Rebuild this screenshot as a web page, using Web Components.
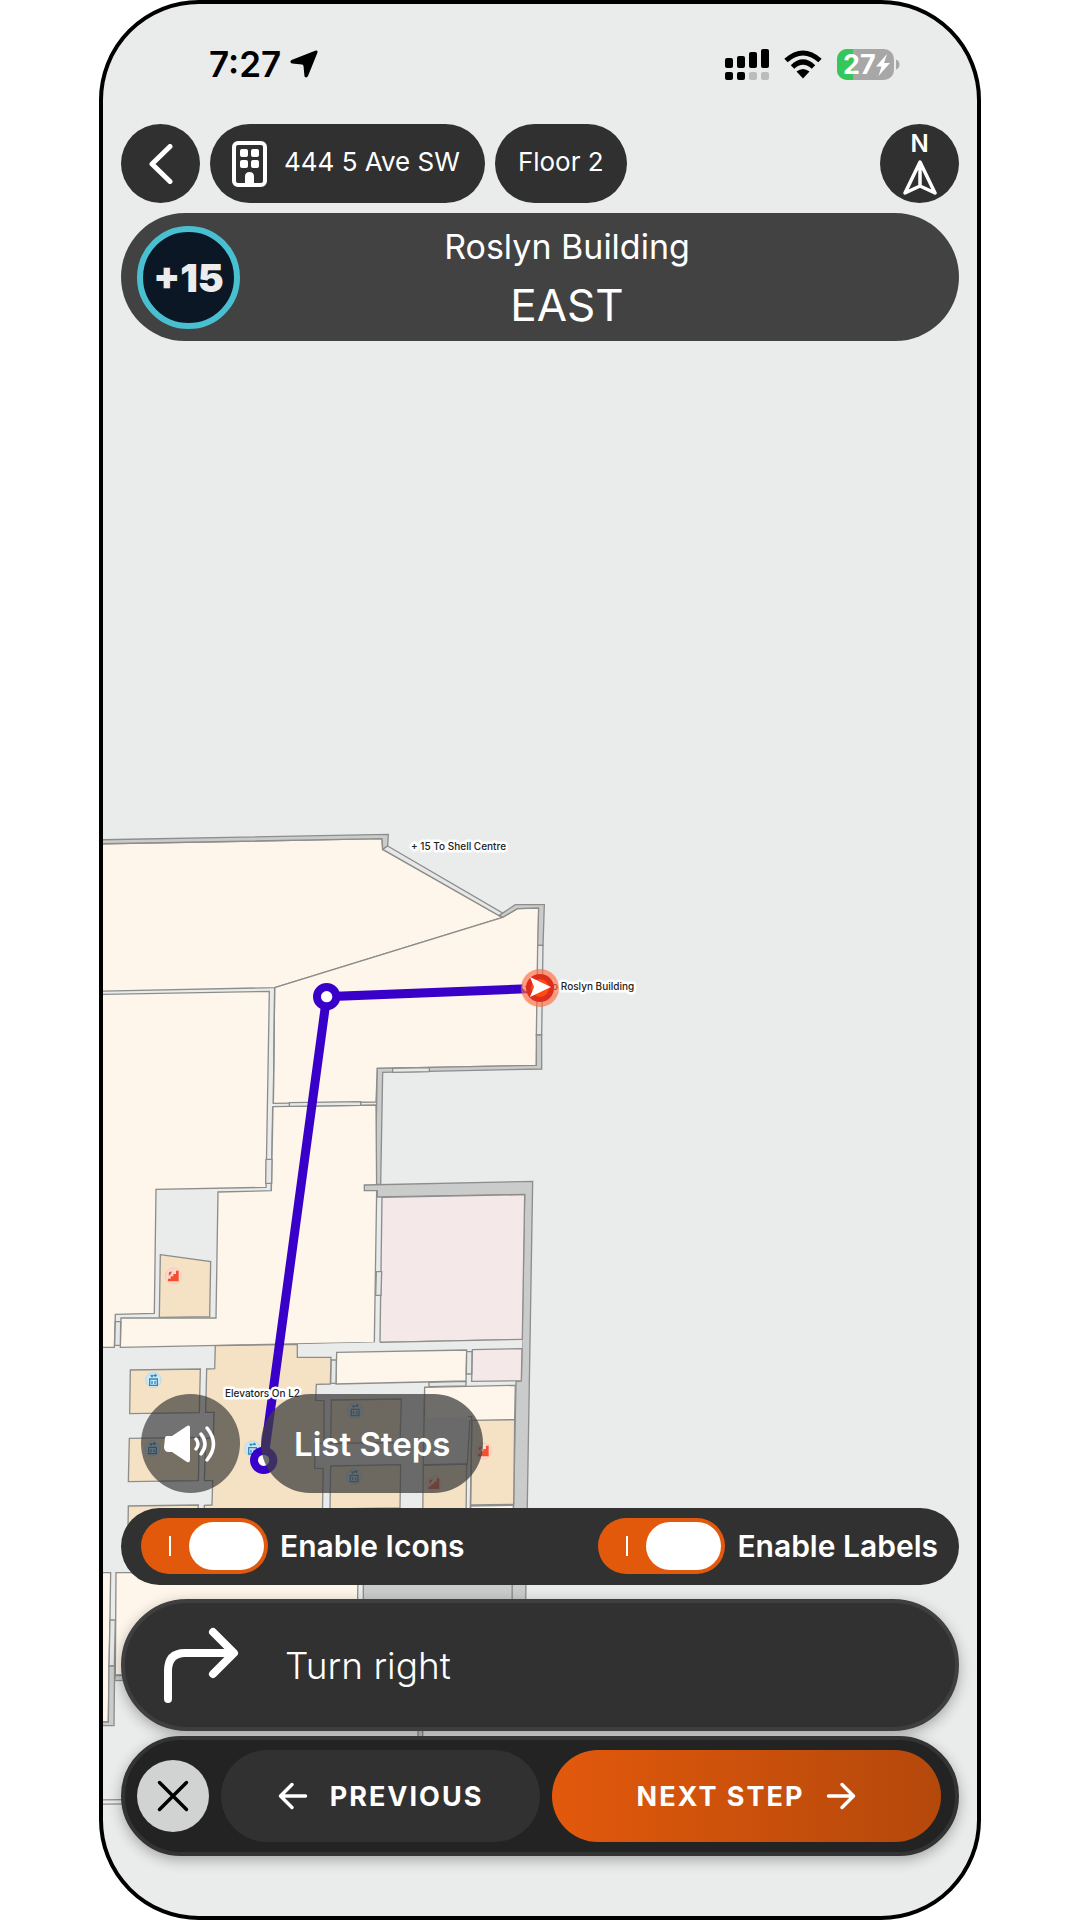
<!DOCTYPE html>
<html lang="en">
<head>
<meta charset="utf-8">
<meta name="viewport" content="width=device-width, initial-scale=1">
<title>Indoor navigation</title>
<style>
  body { margin: 0; background: #fff; font-family: Inter, "Noto Sans", sans-serif; color: #fff; }
</style>
</head>
<body>
<phone-frame>
  <floor-map slot="map"></floor-map>
  <status-bar></status-bar>
  <place-header></place-header>
  <route-banner><span slot="place">Roslyn Building</span><span slot="heading">EAST</span></route-banner>
  <map-actions></map-actions>
  <toggle-bar>
    <toggle-switch>Enable Icons</toggle-switch>
    <toggle-switch>Enable Labels</toggle-switch>
  </toggle-bar>
  <turn-card>Turn right</turn-card>
  <step-nav></step-nav>
</phone-frame>

<script>
const define = (name, html) => {
  const template = document.createElement('template');
  template.innerHTML = `<style>
    *, *::before, *::after { box-sizing: border-box; }
    :host { display: block; box-sizing: border-box; }
    button { border: 0; margin: 0; padding: 0; color: inherit; font: inherit; cursor: pointer;
      display: flex; align-items: center; justify-content: center; }
    svg { display: block; flex: none; }
  </style>` + html;
  customElements.define(name, class extends HTMLElement {
    constructor() {
      super();
      this.attachShadow({ mode: 'open' }).append(template.content.cloneNode(true));
    }
  });
};

define('phone-frame', `
<style>
  :host { position: relative; display: flex; flex-direction: column; max-width: 882px; min-height: 100vh;
    margin: 0 auto; padding: 0 18px 60px; border: solid #000; border-width: 4px; border-radius: 100px;
    background: #eaeceb; overflow: hidden; isolation: isolate; }
  ::slotted([slot=map]) { position: absolute; inset: 0; z-index: -1; }
</style>
<slot name="map"></slot>
<slot></slot>`);

define('status-bar', `
<style>
  :host { display: flex; align-items: center; justify-content: space-between; height: 120px;
    padding: 0 58px 0 88px; color: #000; }
  div { display: flex; align-items: center; }
  .time { gap: 9px; font-size: 35px; font-weight: 600; }
  .signs { gap: 15px; }
  text { font-size: 27px; font-weight: 700; fill: #fff; }
</style>
<div class="time"><span>7:27</span>
  <svg width="28" height="28" viewBox="0 0 28 28"><path d="M25.800 .4Q28 .2 27.500 2.500L18 26Q16.500 28.500 14.500 26.500L13.500 16Q13.200 14.600 12 14.500L2 13.500Q-1 12 1.500 10Z"/></svg>
</div>
<div class="signs">
  <svg width="44" height="31" viewBox="0 0 44 31">
    <rect y="9" width="8" height="10" rx="2"/><rect x="12" y="7" width="8" height="12" rx="2"/>
    <rect x="24" y="3" width="8" height="16" rx="2"/><rect x="36" width="8" height="19" rx="2"/>
    <rect y="23" width="8" height="8" rx="2"/><rect x="12" y="23" width="8" height="8" rx="2"/>
    <rect x="24" y="23" width="8" height="8" rx="2" fill="#bbbdbc"/><rect x="36" y="23" width="8" height="8" rx="2" fill="#bbbdbc"/>
  </svg>
  <svg width="38" height="29" viewBox="0 0 38 29">
    <g fill="none" stroke="#000" stroke-width="5"><path d="M2 10.500Q19-4.500 36 10.500"/><path d="M8.500 17Q19 7 29.500 17"/></g>
    <path d="M12.500 21.500Q19 16.500 25.500 21.500L19 28.500Z"/>
  </svg>
  <svg width="64" height="31" viewBox="0 0 64 31">
    <clipPath id="b"><rect width="57" height="31" rx="10"/></clipPath>
    <g clip-path="url(#b)"><rect width="57" height="31" fill="#a7a7a7"/><rect width="16" height="31" fill="#35c759"/></g>
    <path d="M59 10.500Q62.500 11.500 62.500 15.500T59 20.500Z" fill="#a7a7a7"/>
    <text x="6" y="25">27</text>
    <path d="M50 5L39 17.500H44.500L41.500 27L53 14H47Z" fill="#fff"/>
  </svg>
</div>`);

define('place-header', `
<style>
  :host { display: flex; gap: 10px; font-size: 26px; }
  button { height: 79px; border-radius: 40px; background: #303030; }
  .round { width: 79px; flex: none; }
  .place { padding: 0 25px 0 22px; gap: 17px; }
  .floor { padding: 0 23px; }
  span { margin-bottom: 4px; }
  .compass { margin-left: auto; flex-direction: column; font-size: 24px; line-height: 24px; font-weight: 600; }
</style>
<button class="round" aria-label="Back"><svg width="24" height="40" viewBox="0 0 24 40"><path d="M21 2.500L3 20L21 37.500" fill="none" stroke="#fff" stroke-width="5" stroke-linecap="round" stroke-linejoin="round"/></svg></button>
<button class="place">
  <svg width="35" height="46" viewBox="0 0 35 46" fill="#fff">
    <rect x="2" y="2" width="31" height="42" rx="4" fill="none" stroke="#fff" stroke-width="4"/>
    <rect x="8" y="8" width="8" height="8" rx="2"/><rect x="19" y="8" width="8" height="8" rx="2"/>
    <rect x="8" y="19" width="8" height="8" rx="2"/><rect x="19" y="19" width="8" height="8" rx="2"/>
    <path d="M13 43V35.500Q13 31 17.500 31T22 35.500V43Z"/>
  </svg>
  <span>444 5 Ave SW</span>
</button>
<button class="floor"><span>Floor 2</span></button>
<button class="round compass" aria-label="North"><span>N</span>
  <svg width="34" height="36" viewBox="0 0 34 36"><path d="M17 2L32 33L17 26L2 33ZM17 4V26" fill="none" stroke="#fff" stroke-width="3.500" stroke-linejoin="round"/></svg>
</button>`);

define('route-banner', `
<style>
  :host { display: flex; align-items: center; height: 128px; margin-top: 10px; padding: 0 65px 0 16px;
    border-radius: 64px; background: #424242; }
  .badge { width: 103px; height: 103px; flex: none; display: grid; place-items: center; border-radius: 50%;
    border: 6px solid #48c0d2; background: #0b1724; color: #ececec; font-size: 39px; font-weight: 900; }
  .text { flex: 1; display: flex; flex-direction: column; align-items: center; }
  .place { font-size: 34px; line-height: 55px; }
  .heading { font-size: 44px; line-height: 62px; }
</style>
<div class="badge">+15</div>
<div class="text">
  <div class="place"><slot name="place"></slot></div>
  <div class="heading"><slot name="heading"></slot></div>
</div>`);

define('map-actions', `
<style>
  :host { display: flex; gap: 21px; margin-top: auto; padding: 0 20px; }
  button { height: 99px; border-radius: 50px; }
  .sound { width: 99px; background: rgba(49,49,49,.65); }
  .list { padding: 0 33px; background: rgba(63,63,63,.75); font-size: 33px; font-weight: 600; }
</style>
<button class="sound" aria-label="Sound"><svg width="54" height="38" viewBox="0 0 54 38">
  <path d="M1 13Q1 11 3 11H8L23 1Q26-.5 26 3V35Q26 38 23 37L8 27H5Q0 27 0 22Z" fill="#fff"/>
  <path d="M32 14Q36 19 32 24M37 9Q45 19 37 29M43 3Q56 19 43 35" fill="none" stroke="#fff" stroke-width="3.500" stroke-linecap="round"/>
</svg></button>
<button class="list">List Steps</button>`);

define('toggle-bar', `
<style>
  :host { display: flex; align-items: center; justify-content: space-between; height: 77px; margin-top: 15px;
    padding: 0 21px 2px 20px; border-radius: 39px; background: #313131; }
</style>
<slot></slot>`);

define('toggle-switch', `
<style>
  label { display: flex; align-items: center; gap: 12px; font-size: 30px; font-weight: 600; }
  input { appearance: none; position: relative; width: 127px; height: 56px; margin: 0; border-radius: 28px; background: #888; }
  input:checked { background: #e2590c; }
  input::before { content: ""; position: absolute; right: 4px; top: 4px; width: 75px; height: 48px; border-radius: 24px; background: #fff; }
  input::after { content: ""; position: absolute; left: 28px; top: 18px; width: 2px; height: 20px; background: #fff; }
  input:not(:checked)::before { right: 48px; }
</style>
<label><input type="checkbox" role="switch" checked><slot></slot></label>`);

define('turn-card', `
<style>
  :host { display: flex; align-items: center; gap: 46px; height: 132px; margin-top: 14px; padding: 0 38px;
    border: 4px solid #3f3f3f; border-radius: 66px; background: #313131; box-shadow: 0 4px 14px rgba(0,0,0,.3);
    font-size: 37px; font-weight: 300; }
</style>
<svg width="76" height="76" viewBox="0 0 76 76"><path d="M5 72V44Q5 26 22 26H69M50 5L71 26L50 47" fill="none" stroke="#fff" stroke-width="8" stroke-linecap="round" stroke-linejoin="round"/></svg>
<span><slot></slot></span>`);

define('step-nav', `
<style>
  :host { display: flex; align-items: center; gap: 12px; height: 120px; margin-top: 5px; padding: 0 14px 0 12px;
    border: 4px solid #333; border-radius: 60px; background: #232323; box-shadow: 0 4px 14px rgba(0,0,0,.3);
    font-size: 27px; font-weight: 700; }
  button { height: 92px; border-radius: 46px; gap: 22px; letter-spacing: 2px; }
  .close { width: 72px; height: 72px; flex: none; background: #d1d3d2; }
  .prev { flex: 320 1 0; background: #313131; }
  .next { flex: 390 1 0; background: linear-gradient(90deg, #e2590c, #b4480b); }
  path { fill: none; stroke: currentColor; stroke-width: 3.500; stroke-linecap: round; stroke-linejoin: round; }
</style>
<button class="close" aria-label="Close"><svg width="32" height="32" viewBox="0 0 32 32" color="#000"><path d="M2.500 2.500L29.500 29.500M29.500 2.500L2.500 29.500"/></svg></button>
<button class="prev"><svg width="30" height="28" viewBox="0 0 30 28"><path d="M27.500 14H2.500M14 2.500L2.500 14L14 25.500"/></svg><span>PREVIOUS</span></button>
<button class="next"><span>NEXT STEP</span><svg width="30" height="28" viewBox="0 0 30 28"><path d="M2.500 14H27.500M16 2.500L27.500 14L16 25.500"/></svg></button>`);

define('floor-map', `
<style>
  svg { width: 100%; height: 100%; }
  .w { fill: #cacccb; } .o { fill: #e6e8e7; } .v { fill: #eaeceb; }
  .r { fill: #fef6ea; } .t { fill: #f5e2c4; } .p { fill: #f4e8e8; }
  polygon, .line { stroke: #8d8e8c; stroke-width: 4; }
  .line { fill: none; }
  text { font-size: 10px; font-weight: 500; fill: #222; stroke: #fff; stroke-width: 5px; stroke-linejoin: round; paint-order: stroke; }
</style>
<svg viewBox="103 4 874 1912" preserveAspectRatio="xMidYMid slice" role="img" aria-label="Floor plan">
  <defs>
    <g id="lift"><circle r="23" fill="#cde7f6" stroke="#a5d2ea" stroke-width="2"/>
      <path d="M-11-3H12V16H-11ZM-4 3V12M5 3V12M-8-15L-4-10L0-15M6-10V-16M2-12L6-16L10-12" fill="none" stroke="#3089b7" stroke-width="4"/></g>
    <g id="stair"><circle r="24" fill="#fcd9cd" stroke="#f6c0ae" stroke-width="2"/>
      <path d="M16-16V16H-16V8H-8V1H0V-6H8V-16ZM-13-11L-4-14L-7-6L-14 0Z" fill="#f4502f"/></g>
  </defs>
  <g transform="translate(90 820) scale(.333333)">
    <polygon class="r" points="0,72 876,56 878,88 1238,292 554,503 0,514"/>
    <polygon class="w" points="0,60 895,43 893,78 878,88 876,56 0,72"/>
    <polygon class="o" points="893,78 1240,280 1232,290 878,88"/>
    <polygon class="r" points="554,503 1238,292 1282,266 1346,264 1339,736 862,745 858,846 550,850"/>
    <polygon class="w" points="1238,292 1228,286 1276,254 1363,254 1359,376 1343,376 1346,264 1282,266"/>
    <polygon class="o" points="1343,376 1359,376 1355,645 1339,645"/>
    <polygon class="w" points="862,745 1339,736 1339,645 1355,645 1355,747 878,757 872,1093 855,1093"/>
    <polygon class="o" points="908,745 1018,743 1018,755 908,757"/>
    <polygon class="r" points="0,524 538,514 528,1102 198,1108 193,1480 76,1483 73,1582 0,1582"/>
    <path class="line" d="M554,503L550,850M548,860L544,1112"/>
    <polygon class="r" points="549,860 858,855 860,1112 853,1567 91,1582 93,1494 378,1494 384,1116 544,1112"/>
    <polygon class="o" points="598,848 812,845 812,856 598,859"/>
    <polygon class="o" points="528,1018 546,1018 545,1090 527,1090"/>
    <polygon class="t" points="211,1304 362,1325 359,1490 208,1492"/>
    <polygon class="o" points="76,1505 92,1505 91,1576 74,1576"/>
    <polygon class="w" points="823,1095 1328,1084 1307,2350 1265,2350 1278,1685 1294,1683 1304,1123 862,1131 862,1112 823,1112"/>
    <polygon class="p" points="876,1132 1304,1124 1297,1558 870,1567"/>
    <polygon class="v" points="870,1567 1297,1558 1296,1586 1147,1589 1129,1590 740,1597 723,1612 622,1612 622,1573" style="stroke:none"/>
    <path class="line" d="M870,1567L1297,1558"/>
    <polygon class="o" points="859,1355 875,1355 873,1426 857,1426"/>
    <polygon class="r" points="740,1597 1130,1590 1128,1683 738,1692"/>
    <polygon class="p" points="1147,1589 1296,1586 1294,1682 1145,1684"/>
    <polygon class="o" points="723,1620 739,1620 738,1690 722,1690"/>
    <polygon class="o" points="1130,1595 1146,1595 1145,1662 1129,1662"/>
    <polygon class="o" points="1017,1687 1128,1684 1128,1698 1017,1700"/>
    <polygon class="t" points="376,1577 622,1573 622,1612 723,1612 721,1692 679,1693 677,1741 702,1742 702,1870 675,1870 674,1945 700,1945 697,2090 343,2090 343,2056 366,2055 368,1982 343,1982 347,1855 370,1854 372,1777 347,1777 350,1647 374,1646"/>
    <polygon class="t" points="121,1650 331,1647 328,1778 119,1781"/>
    <polygon class="t" points="118,1855 328,1852 325,1982 115,1985"/>
    <polygon class="t" points="115,2058 325,2055 323,2185 113,2188"/>
    <polygon class="t" points="724,1740 934,1737 930,1868 722,1870"/>
    <polygon class="t" points="722,1938 932,1934 930,2064 720,2067"/>
    <polygon class="v" points="1004,1702 1145,1700 1132,1932 1000,1934"/>
    <polygon class="r" points="1004,1702 1276,1696 1274,1798 1134,1800 1134,1790 1003,1792" style="stroke:none"/>
    <path class="line" d="M1003,1792L1004,1702L1276,1696L1274,1798"/>
    <polygon class="t" points="1000,1936 1130,1932 1128,2100 998,2100"/>
    <polygon class="t" points="1146,1801 1274,1799 1271,2053 1141,2055"/>
    <polygon class="r" points="1141,2058 1270,2056 1269,2100 1140,2100"/>
    <path class="line" d="M1134,1790H1145L1142,2070"/>
    <polygon class="r" points="0,2258 62,2258 55,2706 0,2706"/>
    <polygon class="r" points="78,2258 804,2258 800,2560 76,2565"/>
    <polygon class="w" points="820,2200 1267,2200 1265,2560 820,2560"/>
    <polygon class="o" points="60,2400 76,2400 73,2538 57,2538"/>
    <polygon class="w" points="57,2538 74,2538 72,2717 0,2717 0,2706 55,2706"/>
    <polygon class="w" points="76,2567 400,2560 400,2576 74,2582"/>
    <polygon class="w" points="984,2650 998,2650 998,2800 984,2800"/>
    <path class="line" d="M0,2940L300,2937M0,2953L300,2950"/>
    <use href="#stair" x="250" y="1368"/><use href="#stair" x="1180" y="1893"/><use href="#stair" x="1032" y="1991"/>
    <use href="#lift" x="190" y="1680"/><use href="#lift" x="187" y="1885"/><use href="#lift" x="487" y="1886"/>
    <use href="#lift" x="795" y="1771"/><use href="#lift" x="792" y="1969"/>
    <path d="M1350,505L710,530L521,1921" fill="none" stroke="#3800c8" stroke-width="27"/>
    <g fill="#fff" stroke="#3800c8" stroke-width="24"><circle cx="710" cy="530" r="29"/><circle cx="521" cy="1921" r="29"/></g>
  </g>
  <text x="411" y="850">+ 15 To Shell Centre</text>
  <text x="225" y="1397">Elevators On L2</text>
  <text x="524" y="990">+ 15 To Roslyn Building</text>
  <g transform="translate(540 988)">
    <circle r="19" fill="#ff6a40" fill-opacity=".65"/>
    <circle r="14" fill="#dc2d1d"/><circle r="9" fill="#ff4a12"/>
    <path d="M-10-11L11-1L-10 9L-6-1Z" fill="#fff"/>
  </g>
</svg>`);
</script>
</body>
</html>
